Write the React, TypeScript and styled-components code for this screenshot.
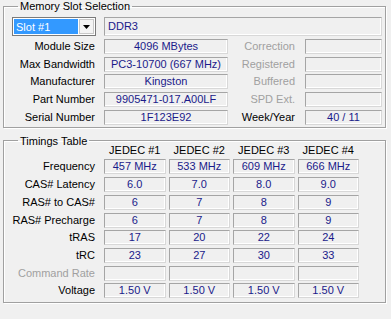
import React from "react";
import styled, { createGlobalStyle } from "styled-components";

const Global = createGlobalStyle`
  html, body { margin: 0; padding: 0; background: #f0f0f0; }
  body { font-family: "Liberation Sans", Arial, sans-serif; font-size: 11px; color: #000; }
`;

const Page = styled.div`
  width: 391px;
  height: 319px;
  background: #f0f0f0;
  padding: 0 5px 0 3px;
  box-sizing: border-box;
  display: flex;
  flex-direction: column;
  gap: 7px;
  overflow: hidden;
`;

const Group = styled.fieldset<{ $pt: number; $pb: number }>`
  margin: 0;
  padding: ${(p) => p.$pt}px 2px ${(p) => p.$pb}px 8px;
  border: 1px solid #a0a0a0;
  box-shadow: inset 1px 1px 0 #fff, 1px 1px 0 #fff;
  min-width: 0;
`;

const Legend = styled.legend`
  margin-left: 6px;
  padding: 0 2px;
  line-height: 12px;
  font-size: 11px;
`;

const SlotGrid = styled.div`
  display: grid;
  grid-template-columns: 92px 124px 77px 77px;
  grid-template-rows: 19px;
  grid-auto-rows: 15px;
  row-gap: 2.75px;
`;

const Label = styled.div<{ $dim?: boolean; $pr?: number }>`
  display: flex;
  align-items: center;
  justify-content: flex-end;
  padding-right: ${(p) => p.$pr ?? 9}px;
  color: ${(p) => (p.$dim ? "#a0a0a0" : "#000")};
  white-space: nowrap;
  line-height: 15px;
`;

const Field = styled.div<{ $left?: boolean; $span?: number }>`
  box-sizing: border-box;
  border: 1px solid #a5a5a5;
  border-right-color: #d8d8d8;
  border-bottom-color: #d8d8d8;
  box-shadow: inset -1px -1px 0 #fff;
  background: #f0f0f0;
  color: #1a1a8a;
  display: flex;
  align-items: center;
  justify-content: ${(p) => (p.$left ? "flex-start" : "center")};
  padding-left: ${(p) => (p.$left ? "3px" : "0")};
  white-space: nowrap;
  line-height: 13px;
  ${(p) => (p.$span ? `grid-column: span ${p.$span};` : "")}
`;

const Combo = styled.div`
  display: flex;
  box-sizing: border-box;
  width: 84px;
  height: 19px;
  border: 1px solid #7a7a7a;
  background: #fff;
  padding: 1px;
  gap: 1px;
`;

const ComboText = styled.div`
  flex: 1;
  background: #3399ff;
  color: #fff;
  display: flex;
  align-items: center;
  padding-left: 2px;
`;

const ComboButton = styled.div`
  width: 15px;
  box-sizing: border-box;
  border: 1px solid #c8c8c8;
  background: #f4f4f4;
  display: flex;
  align-items: center;
  justify-content: center;
`;

const TimingGrid = styled.div`
  display: grid;
  grid-template-columns: 89px repeat(4, 61.5px);
  grid-template-rows: 11px;
  grid-auto-rows: 15px;
  column-gap: 3px;
  row-gap: 2.7px;
  margin-top: -1px;
`;

const Header = styled.div`
  text-align: center;
  line-height: 9px;
  color: #000;
`;

const Row = styled.div`
  display: contents;
`;

const slotRows: [string, string, string, boolean, string][] = [
  ["Module Size", "4096 MBytes", "Correction", true, ""],
  ["Max Bandwidth", "PC3-10700 (667 MHz)", "Registered", true, ""],
  ["Manufacturer", "Kingston", "Buffered", true, ""],
  ["Part Number", "9905471-017.A00LF", "SPD Ext.", true, ""],
  ["Serial Number", "1F123E92", "Week/Year", false, "40 / 11"],
];

const timings: [string, string[], boolean?][] = [
  ["Frequency", ["457 MHz", "533 MHz", "609 MHz", "666 MHz"]],
  ["CAS# Latency", ["6.0", "7.0", "8.0", "9.0"]],
  ["RAS# to CAS#", ["6", "7", "8", "9"]],
  ["RAS# Precharge", ["6", "7", "8", "9"]],
  ["tRAS", ["17", "20", "22", "24"]],
  ["tRC", ["23", "27", "30", "33"]],
  ["Command Rate", ["", "", "", ""], true],
  ["Voltage", ["1.50 V", "1.50 V", "1.50 V", "1.50 V"]],
];

export default function App() {
  return (
    <>
      <Global />
      <Page>
        <Group $pt={5} $pb={2}>
          <Legend>Memory Slot Selection</Legend>
          <SlotGrid>
            <Combo>
              <ComboText>Slot #1</ComboText>
              <ComboButton>
                <svg width="7" height="4" viewBox="0 0 7 4">
                  <path d="M0 0h7L3.5 4z" fill="#000" />
                </svg>
              </ComboButton>
            </Combo>
            <Field $left $span={3}>DDR3</Field>
            {slotRows.map(([l, v, l2, dim, v2]) => (
              <Row key={l}>
                <Label>{l}</Label>
                <Field>{v}</Field>
                <Label $dim={dim} $pr={10}>{l2}</Label>
                <Field>{v2}</Field>
              </Row>
            ))}
          </SlotGrid>
        </Group>
        <Group $pt={0} $pb={4}>
          <Legend>Timings Table</Legend>
          <TimingGrid>
            <div />
            {["JEDEC #1", "JEDEC #2", "JEDEC #3", "JEDEC #4"].map((h) => (
              <Header key={h}>{h}</Header>
            ))}
            {timings.map(([l, vals, dim]) => (
              <Row key={l}>
                <Label $dim={dim} $pr={6}>{l}</Label>
                {vals.map((v, i) => (
                  <Field key={i}>{v}</Field>
                ))}
              </Row>
            ))}
          </TimingGrid>
        </Group>
      </Page>
    </>
  );
}
